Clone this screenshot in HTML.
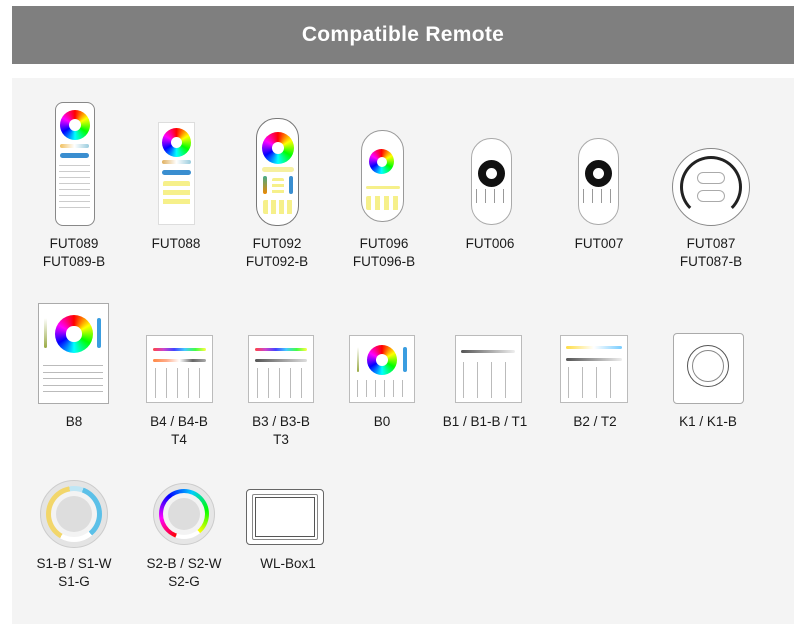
<!DOCTYPE html>
<html><head><meta charset="utf-8"><style>
*{margin:0;padding:0;box-sizing:border-box}
body{width:800px;height:630px;background:#fff;position:relative;overflow:hidden;font-family:"Liberation Sans",Arial,sans-serif}
.hdr{position:absolute;left:12px;top:6px;width:782px;height:58px;background:#7f7f7f;color:#fff;font-size:21px;font-weight:bold;text-align:center;line-height:58px;letter-spacing:0.3px}
.panel{position:absolute;left:12px;top:78px;width:782px;height:546px;background:#f4f4f4}
.a{position:absolute}
.lbl{position:absolute;width:140px;margin-left:-70px;text-align:center;font-size:13.5px;line-height:18px;color:#1a1a1a}
.rw{position:absolute;border-radius:50%;background:conic-gradient(#f00,#ff0,#0f0,#0ff,#00f,#f0f,#f00)}
.rw::after{content:"";position:absolute;left:30%;top:30%;width:40%;height:40%;border-radius:50%;background:#fff}
.dev{position:absolute;background:#fff;border:1px solid #aaa}
.btn{position:absolute;border:1px solid #aaa;border-radius:2px;background:#fff}
.y{position:absolute;background:#f6f08a;border-radius:2px}
.bar{position:absolute;border-radius:3px}
</style></head><body>
<div class="hdr">Compatible Remote</div>
<div class="panel"></div>

<!-- FUT089 -->
<div class="dev" style="left:55px;top:102px;width:40px;height:124px;border-radius:8px;border-color:#888"></div>
<div class="rw" style="left:60px;top:110px;width:30px;height:30px"></div>
<div class="bar" style="left:60px;top:144px;width:29px;height:4px;background:linear-gradient(90deg,#f0c060,#fff,#9cd)"></div>
<div class="bar" style="left:60px;top:153px;width:29px;height:5px;background:#3a8ed0"></div>
<div class="a" style="left:59px;top:163px;width:31px;height:47px;background:repeating-linear-gradient(#fff 0 2px,#ccc 2px 3px,#fff 3px 6px)"></div>
<div class="lbl" style="left:74px;top:235px">FUT089<br>FUT089-B</div>

<!-- FUT088 -->
<div class="dev" style="left:158px;top:122px;width:37px;height:103px;border-color:#ddd"></div>
<div class="rw" style="left:162px;top:128px;width:29px;height:29px"></div>
<div class="bar" style="left:162px;top:160px;width:29px;height:4px;background:linear-gradient(90deg,#e0b060,#fff,#9cd)"></div>
<div class="bar" style="left:162px;top:170px;width:29px;height:5px;background:#3a8ed0"></div>
<div class="y" style="left:163px;top:181px;width:27px;height:25px;background:repeating-linear-gradient(#f6f08a 0 5px,#fff 5px 9px)"></div>
<div class="lbl" style="left:176px;top:235px">FUT088</div>

<!-- FUT092 -->
<div class="dev" style="left:256px;top:118px;width:43px;height:108px;border-radius:20px;border-color:#777"></div>
<div class="rw" style="left:262px;top:132px;width:32px;height:32px"></div>
<div class="bar" style="left:262px;top:167px;width:32px;height:5px;background:#f6f0a0"></div>
<div class="bar" style="left:263px;top:176px;width:4px;height:18px;background:linear-gradient(#4a8,#e80)"></div>
<div class="bar" style="left:289px;top:176px;width:4px;height:18px;background:#3a8ed0"></div>
<div class="y" style="left:272px;top:178px;width:12px;height:16px;background:repeating-linear-gradient(#f6f08a 0 3px,#fff 3px 6px)"></div>
<div class="y" style="left:263px;top:200px;width:30px;height:14px;background:repeating-linear-gradient(90deg,#f6f08a 0 5px,#fff 5px 8px)"></div>
<div class="lbl" style="left:277px;top:235px">FUT092<br>FUT092-B</div>

<!-- FUT096 -->
<div class="dev" style="left:361px;top:130px;width:43px;height:92px;border-radius:21px;border-color:#999"></div>
<div class="rw" style="left:369px;top:149px;width:25px;height:25px"></div>
<div class="y" style="left:366px;top:186px;width:34px;height:3px"></div>
<div class="y" style="left:366px;top:196px;width:33px;height:14px;background:repeating-linear-gradient(90deg,#f6f08a 0 5px,#fff 5px 9px)"></div>
<div class="lbl" style="left:384px;top:235px">FUT096<br>FUT096-B</div>

<!-- FUT006 / 007 -->
<div class="dev" style="left:471px;top:138px;width:41px;height:87px;border-radius:20px"></div>
<div class="a" style="left:478px;top:160px;width:27px;height:27px;border-radius:50%;border:8px solid #111"></div>
<div class="a" style="left:474px;top:189px;width:35px;height:14px;background:repeating-linear-gradient(90deg,#fff 0 2px,#999 2px 3px,#fff 3px 9px)"></div>
<div class="lbl" style="left:490px;top:235px">FUT006</div>
<div class="dev" style="left:578px;top:138px;width:41px;height:87px;border-radius:20px"></div>
<div class="a" style="left:585px;top:160px;width:27px;height:27px;border-radius:50%;border:8px solid #111"></div>
<div class="a" style="left:581px;top:189px;width:35px;height:14px;background:repeating-linear-gradient(90deg,#fff 0 2px,#999 2px 3px,#fff 3px 9px)"></div>
<div class="lbl" style="left:599px;top:235px">FUT007</div>

<!-- FUT087 -->
<div class="a" style="left:672px;top:148px;width:78px;height:78px;border-radius:50%;border:1px solid #888;background:#fff"></div>
<div class="a" style="left:680px;top:156px;width:62px;height:62px;border-radius:50%;border:3px solid #222;border-bottom-color:transparent"></div>
<div class="btn" style="left:697px;top:172px;width:28px;height:12px;border-radius:8px"></div>
<div class="btn" style="left:697px;top:190px;width:28px;height:12px;border-radius:8px"></div>
<div class="lbl" style="left:711px;top:235px">FUT087<br>FUT087-B</div>

<!-- B8 -->
<div class="dev" style="left:38px;top:303px;width:71px;height:101px"></div>
<div class="rw" style="left:55px;top:315px;width:38px;height:38px"></div>
<div class="bar" style="left:44px;top:318px;width:3px;height:30px;background:linear-gradient(#fff,#9a4)"></div>
<div class="bar" style="left:97px;top:318px;width:4px;height:30px;background:#3a9de0"></div>
<div class="a" style="left:43px;top:362px;width:60px;height:36px;background:repeating-linear-gradient(#fff 0 3px,#bbb 3px 4px,#fff 4px 10px,#bbb 10px 11px,#fff 11px 13px)"></div>
<div class="lbl" style="left:74px;top:413px">B8</div>

<!-- B4 -->
<div class="dev" style="left:146px;top:335px;width:67px;height:68px;border-color:#bbb"></div>
<div class="bar" style="left:153px;top:348px;width:53px;height:3px;background:linear-gradient(90deg,#f44,#c4c,#44f,#4cf,#4f4,#ff4)"></div>
<div class="bar" style="left:153px;top:359px;width:53px;height:3px;background:linear-gradient(90deg,#f84,#fa8,#fff,#666,#aaa)"></div>
<div class="a" style="left:153px;top:368px;width:53px;height:30px;background:repeating-linear-gradient(90deg,#fff 0 2px,#bbb 2px 3px,#fff 3px 11px)"></div>
<div class="lbl" style="left:179px;top:413px">B4 / B4-B<br>T4</div>

<!-- B3 -->
<div class="dev" style="left:248px;top:335px;width:66px;height:68px;border-color:#bbb"></div>
<div class="bar" style="left:255px;top:348px;width:52px;height:3px;background:linear-gradient(90deg,#f44,#c4c,#44f,#4cf,#4f4,#ff4)"></div>
<div class="bar" style="left:255px;top:359px;width:52px;height:3px;background:linear-gradient(90deg,#555,#ddd)"></div>
<div class="a" style="left:255px;top:368px;width:52px;height:30px;background:repeating-linear-gradient(90deg,#fff 0 2px,#bbb 2px 3px,#fff 3px 11px)"></div>
<div class="lbl" style="left:281px;top:413px">B3 / B3-B<br>T3</div>

<!-- B0 -->
<div class="dev" style="left:349px;top:335px;width:66px;height:68px;border-color:#bbb"></div>
<div class="rw" style="left:367px;top:345px;width:30px;height:30px"></div>
<div class="bar" style="left:357px;top:347px;width:2px;height:25px;background:linear-gradient(#fff,#9a4)"></div>
<div class="bar" style="left:403px;top:347px;width:4px;height:25px;background:#3a9de0"></div>
<div class="a" style="left:355px;top:380px;width:55px;height:17px;background:repeating-linear-gradient(90deg,#fff 0 2px,#bbb 2px 3px,#fff 3px 9px)"></div>
<div class="lbl" style="left:382px;top:413px">B0</div>

<!-- B1 -->
<div class="dev" style="left:455px;top:335px;width:67px;height:68px;border-color:#bbb"></div>
<div class="bar" style="left:461px;top:350px;width:54px;height:3px;background:linear-gradient(90deg,#555,#eee)"></div>
<div class="a" style="left:461px;top:362px;width:54px;height:36px;background:repeating-linear-gradient(90deg,#fff 0 2px,#bbb 2px 3px,#fff 3px 14px)"></div>
<div class="lbl" style="left:485px;top:413px">B1 / B1-B / T1</div>

<!-- B2 -->
<div class="dev" style="left:560px;top:335px;width:68px;height:68px;border-color:#bbb"></div>
<div class="bar" style="left:566px;top:346px;width:56px;height:3px;background:linear-gradient(90deg,#fd4,#fff,#7cf)"></div>
<div class="bar" style="left:566px;top:358px;width:56px;height:3px;background:linear-gradient(90deg,#555,#eee)"></div>
<div class="a" style="left:566px;top:367px;width:56px;height:31px;background:repeating-linear-gradient(90deg,#fff 0 2px,#bbb 2px 3px,#fff 3px 14px)"></div>
<div class="lbl" style="left:595px;top:413px">B2 / T2</div>

<!-- K1 -->
<div class="dev" style="left:673px;top:333px;width:71px;height:71px;border-radius:4px;border-color:#aaa"></div>
<div class="a" style="left:687px;top:345px;width:42px;height:42px;border-radius:50%;border:1px solid #555"></div>
<div class="a" style="left:692px;top:350px;width:32px;height:32px;border-radius:50%;border:1px solid #888"></div>
<div class="lbl" style="left:708px;top:413px">K1 / K1-B</div>

<!-- S1 -->
<div class="a" style="left:40px;top:480px;width:68px;height:68px;border-radius:50%;background:#e4e4e4;border:1px solid #ccc"></div>
<div class="a" style="left:46px;top:486px;width:56px;height:56px;border-radius:50%;background:conic-gradient(from 200deg,#fff 0 10deg,#f2d66a 10deg 150deg,#bfe6f5 150deg 180deg,#5bc0e8 180deg 300deg,#fff 300deg)"></div>
<div class="a" style="left:51px;top:491px;width:46px;height:46px;border-radius:50%;background:#f3f3f3"></div>
<div class="a" style="left:56px;top:496px;width:36px;height:36px;border-radius:50%;background:#ddd"></div>
<div class="lbl" style="left:74px;top:555px">S1-B / S1-W<br>S1-G</div>

<!-- S2 -->
<div class="a" style="left:153px;top:483px;width:62px;height:62px;border-radius:50%;background:#e6e6e6;border:1px solid #ccc"></div>
<div class="a" style="left:159px;top:489px;width:50px;height:50px;border-radius:50%;background:conic-gradient(from 200deg,#f00,#f0f,#00f,#0cf,#0f0,#ff0 300deg,#fff 300deg)"></div>
<div class="a" style="left:163px;top:493px;width:42px;height:42px;border-radius:50%;background:#f3f3f3"></div>
<div class="a" style="left:168px;top:498px;width:32px;height:32px;border-radius:50%;background:#ddd"></div>
<div class="lbl" style="left:184px;top:555px">S2-B / S2-W<br>S2-G</div>

<!-- WL-Box1 -->
<div class="a" style="left:246px;top:489px;width:78px;height:56px;border:1px solid #666;border-radius:4px;background:#fff"></div>
<div class="a" style="left:252px;top:494px;width:66px;height:46px;border:1px solid #888;border-radius:2px"></div>
<div class="a" style="left:255px;top:497px;width:60px;height:40px;border:1px solid #555"></div>
<div class="lbl" style="left:288px;top:555px">WL-Box1</div>
</body></html>
